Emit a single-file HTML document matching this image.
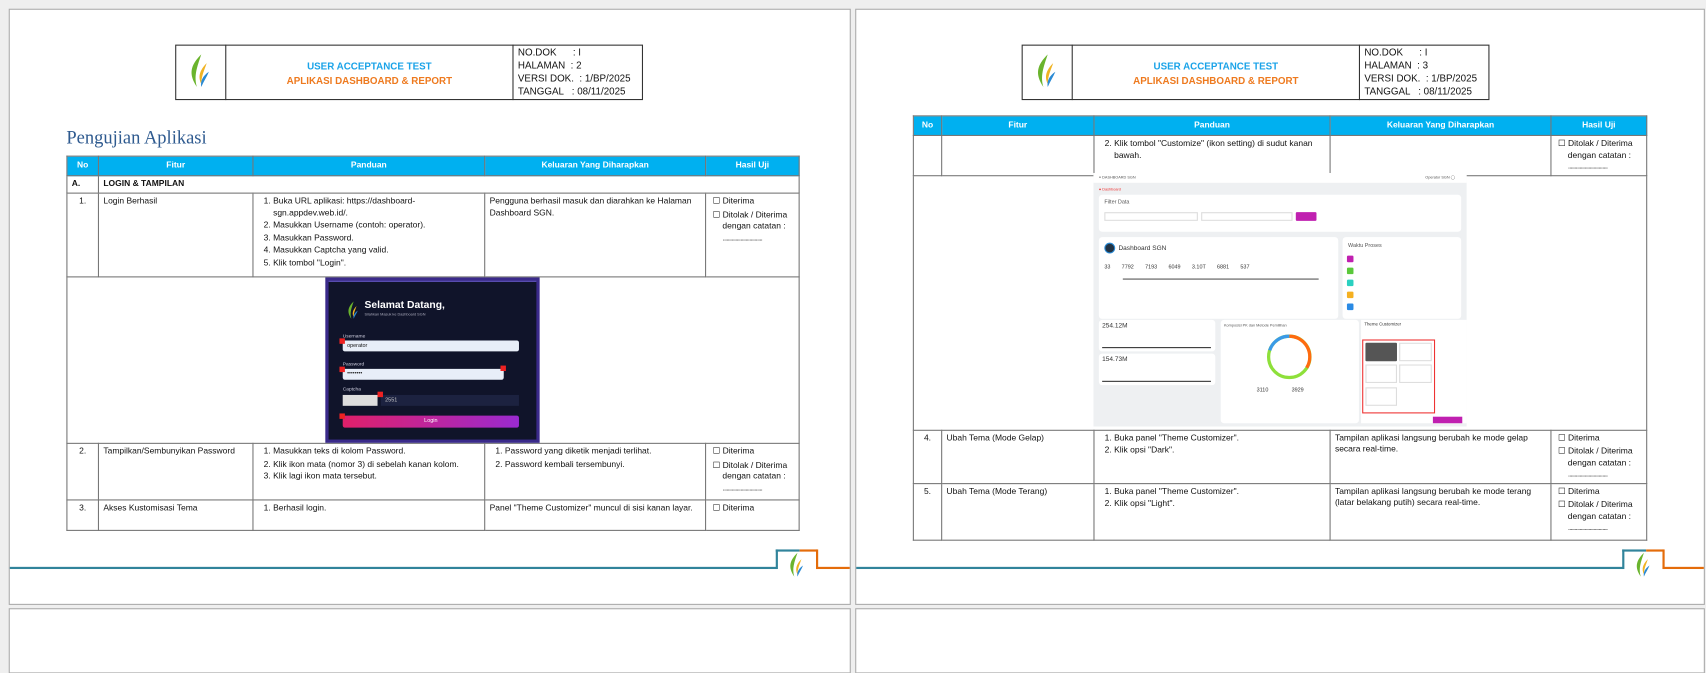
<!DOCTYPE html>
<html><head><meta charset="utf-8">
<style>
*{margin:0;padding:0;box-sizing:border-box}
body{width:1706px;height:613px;background:#efefef;position:relative;overflow:hidden;font-family:"Liberation Sans",sans-serif;font-size:8px;color:#111}
#w{position:absolute;left:0;top:0;width:1568px;height:564px;transform:scale(1.088);transform-origin:0 0}
.pg{position:absolute;background:#fff;border:1px solid #aaa}
.a{position:absolute}
.hb{position:absolute;border:1px solid #333;background:#fff}
.t1{color:#1aa3e8;font-weight:bold;font-size:9px;text-align:center}
.t2{color:#ee7a1f;font-weight:bold;font-size:9px;text-align:center}
.meta{font-size:9px;line-height:12px}
table{border-collapse:collapse;position:absolute;table-layout:fixed;background:#fff}
td,th{border:1px solid #777;vertical-align:top;padding:2px 4px;font-size:7.8px;line-height:10.5px}
th{background:#00b0f0;color:#fff;font-weight:bold;text-align:center;padding:3px 4px}
ol{padding-left:14px}
li{margin-bottom:1px}
.cb{padding-left:11px;text-indent:-9px}
.dots{color:#555;letter-spacing:-1px}
</style></head><body><div id="w">

<div class="pg" style="left:8px;top:8px;width:774px;height:548px"></div>
<div class="pg" style="left:8px;top:559px;width:774px;height:60px"></div>
<div class="pg" style="left:786px;top:8px;width:781px;height:548px"></div>
<div class="pg" style="left:786px;top:559px;width:781px;height:60px"></div>

<svg width="0" height="0" style="position:absolute"><defs>
<g id="logo">
<path d="M12 0 C2 10 0 18 8 30 C5 20 8 12 12 0Z" fill="#6ab42d"/>
<path d="M17 8 C10 15 9 21 12 27 C12 20 15 14 17 8Z" fill="#f0b323"/>
<path d="M19 16 C13 20 11 25 12 30 C14 25 17 21 19 16Z" fill="#2a8ad4"/>
</g></defs></svg>

<div class="hb" style="left:161px;top:41px;width:430px;height:51px"></div>
<div class="a" style="left:207px;top:41px;width:1px;height:51px;background:#333"></div>
<div class="a" style="left:471px;top:41px;width:1px;height:51px;background:#333"></div>
<svg class="a" style="left:173px;top:50px" width="22" height="32"><use href="#logo"/></svg>
<div class="a t1" style="left:208px;top:56px;width:263px">USER ACCEPTANCE TEST</div>
<div class="a t2" style="left:208px;top:69px;width:263px">APLIKASI DASHBOARD &amp; REPORT</div>
<div class="a meta" style="left:476px;top:42px">NO.DOK &nbsp;&nbsp;&nbsp;&nbsp;&nbsp;: I<br>HALAMAN &nbsp;: 2<br>VERSI DOK. &nbsp;: 1/BP/2025<br>TANGGAL &nbsp;&nbsp;: 08/11/2025</div>

<div class="a" style="left:61px;top:117px;font-family:'Liberation Serif',serif;font-size:17px;color:#2e5a8f">Pengujian Aplikasi</div>

<table style="left:61px;top:143px;width:673px">
<colgroup><col style="width:29px"><col style="width:142px"><col style="width:213px"><col style="width:203px"><col style="width:86px"></colgroup>
<tr style="height:18px"><th>No</th><th>Fitur</th><th>Panduan</th><th>Keluaran Yang Diharapkan</th><th>Hasil Uji</th></tr>
<tr style="height:16px"><td style="font-weight:bold">A.</td><td colspan="4" style="font-weight:bold">LOGIN &amp; TAMPILAN</td></tr>
<tr style="height:77px"><td style="text-align:center">1.</td><td>Login Berhasil</td><td><ol><li>Buka URL aplikasi: https://dashboard-sgn.appdev.web.id/.</li><li>Masukkan Username (contoh: operator).</li><li>Masukkan Password.</li><li>Masukkan Captcha yang valid.</li><li>Klik tombol "Login".</li></ol></td><td>Pengguna berhasil masuk dan diarahkan ke Halaman Dashboard SGN.</td><td><div class="cb">☐ Diterima</div><div class="cb" style="margin-top:2px">☐ Ditolak / Diterima dengan catatan :<br><span class="dots">...............................</span></div></td></tr>
<tr style="height:153px"><td colspan="5"></td></tr>
<tr style="height:52px"><td style="text-align:center">2.</td><td>Tampilkan/Sembunyikan Password</td><td><ol><li>Masukkan teks di kolom Password.</li><li>Klik ikon mata (nomor 3) di sebelah kanan kolom.</li><li>Klik lagi ikon mata tersebut.</li></ol></td><td><ol><li>Password yang diketik menjadi terlihat.</li><li>Password kembali tersembunyi.</li></ol></td><td><div class="cb">☐ Diterima</div><div class="cb" style="margin-top:2px">☐ Ditolak / Diterima dengan catatan :<br><span class="dots">...............................</span></div></td></tr>
<tr style="height:28px"><td style="text-align:center">3.</td><td>Akses Kustomisasi Tema</td><td><ol><li>Berhasil login.</li></ol></td><td>Panel "Theme Customizer" muncul di sisi kanan layar.</td><td><div class="cb">☐ Diterima</div></td></tr>
</table>

<div class="a" style="left:299px;top:255px;width:197px;height:152px;background:#3a2a8a;padding:3px">
<div style="width:100%;height:100%;background:#10142a;position:relative;border-top:1px solid #6a5ad0">
<svg class="a" style="left:16px;top:18px" width="12" height="16" viewBox="0 0 20 30"><use href="#logo"/></svg>
<div class="a" style="left:33px;top:16px;color:#fff;font-size:9.5px;font-weight:bold">Selamat Datang,</div>
<div class="a" style="left:33px;top:28px;color:#aab;font-size:3.5px">Silahkan Masuk ke Dashboard SGN</div>
<div class="a" style="left:13px;top:47px;color:#ccd;font-size:4.5px">Username</div>
<div class="a" style="left:13px;top:54px;width:162px;height:10px;background:#e8eef8;border-radius:2px;font-size:5px;padding:2px 4px">operator</div>
<div class="a" style="left:13px;top:73px;color:#ccd;font-size:4.5px">Password</div>
<div class="a" style="left:13px;top:80px;width:148px;height:10px;background:#e8eef8;border-radius:2px;font-size:5px;padding:1px 4px">••••••••</div>
<div class="a" style="left:13px;top:96px;color:#ccd;font-size:4.5px">Captcha</div>
<div class="a" style="left:13px;top:104px;width:32px;height:10px;background:#ddd"></div>
<div class="a" style="left:48px;top:104px;width:127px;height:10px;background:#1c2240;color:#ccc;font-size:5px;padding:2px 4px">2551</div>
<div class="a" style="left:13px;top:123px;width:162px;height:11px;background:linear-gradient(90deg,#e0206a,#9a2ad0);border-radius:2px;color:#fff;font-size:5px;text-align:center;line-height:11px">Login</div>
<div class="a" style="left:10px;top:52px;width:5px;height:5px;background:#e22"></div>
<div class="a" style="left:10px;top:78px;width:5px;height:5px;background:#e22"></div>
<div class="a" style="left:158px;top:77px;width:5px;height:5px;background:#e22"></div>
<div class="a" style="left:45px;top:101px;width:5px;height:5px;background:#e22"></div>
<div class="a" style="left:10px;top:121px;width:5px;height:5px;background:#e22"></div>
</div></div>

<div class="a" style="left:9px;top:521px;width:705px;height:2px;background:#31849b"></div>
<div class="a" style="left:713px;top:505px;width:2px;height:18px;background:#31849b"></div>
<div class="a" style="left:713px;top:505px;width:22px;height:2px;background:#31849b"></div>
<div class="a" style="left:735px;top:505px;width:16px;height:2px;background:#e46c0a"></div>
<div class="a" style="left:750px;top:505px;width:2px;height:18px;background:#e46c0a"></div>
<div class="a" style="left:750px;top:521px;width:31px;height:2px;background:#e46c0a"></div>
<svg class="a" style="left:724px;top:508px" width="15" height="22" viewBox="0 0 20 30"><use href="#logo"/></svg>

<div class="hb" style="left:939px;top:41px;width:430px;height:51px"></div>
<div class="a" style="left:985px;top:41px;width:1px;height:51px;background:#333"></div>
<div class="a" style="left:1249px;top:41px;width:1px;height:51px;background:#333"></div>
<svg class="a" style="left:951px;top:50px" width="22" height="32"><use href="#logo"/></svg>
<div class="a t1" style="left:986px;top:56px;width:263px">USER ACCEPTANCE TEST</div>
<div class="a t2" style="left:986px;top:69px;width:263px">APLIKASI DASHBOARD &amp; REPORT</div>
<div class="a meta" style="left:1254px;top:42px">NO.DOK &nbsp;&nbsp;&nbsp;&nbsp;&nbsp;: I<br>HALAMAN &nbsp;: 3<br>VERSI DOK. &nbsp;: 1/BP/2025<br>TANGGAL &nbsp;&nbsp;: 08/11/2025</div>

<table style="left:839px;top:106px;width:674px">
<colgroup><col style="width:26px"><col style="width:140px"><col style="width:217px"><col style="width:203px"><col style="width:88px"></colgroup>
<tr style="height:18px"><th>No</th><th>Fitur</th><th>Panduan</th><th>Keluaran Yang Diharapkan</th><th>Hasil Uji</th></tr>
<tr style="height:34px"><td></td><td></td><td><ol start="2"><li>Klik tombol "Customize" (ikon setting) di sudut kanan bawah.</li></ol></td><td></td><td><div class="cb">☐ Ditolak / Diterima dengan catatan :<br><span class="dots">...............................</span></div></td></tr>
<tr style="height:234px"><td colspan="5"></td></tr>
<tr style="height:49px"><td style="text-align:center">4.</td><td>Ubah Tema (Mode Gelap)</td><td><ol><li>Buka panel "Theme Customizer".</li><li>Klik opsi "Dark".</li></ol></td><td>Tampilan aplikasi langsung berubah ke mode gelap secara real-time.</td><td><div class="cb">☐ Diterima</div><div class="cb" style="margin-top:2px">☐ Ditolak / Diterima dengan catatan :<br><span class="dots">...............................</span></div></td></tr>
<tr style="height:52px"><td style="text-align:center">5.</td><td>Ubah Tema (Mode Terang)</td><td><ol><li>Buka panel "Theme Customizer".</li><li>Klik opsi "Light".</li></ol></td><td>Tampilan aplikasi langsung berubah ke mode terang (latar belakang putih) secara real-time.</td><td><div class="cb">☐ Diterima</div><div class="cb" style="margin-top:2px">☐ Ditolak / Diterima dengan catatan :<br><span class="dots">...............................</span></div></td></tr>
</table>

<div class="a" style="left:1005px;top:159px;width:343px;height:233px;background:#eef0f2;font-size:4px;color:#555">
<div class="a" style="left:0;top:0;width:343px;height:9px;background:#fff"></div>
<div class="a" style="left:5px;top:2px;font-size:3.5px">≡ DASHBOARD SGN</div>
<div class="a" style="left:305px;top:2px;font-size:3.5px">Operator SGN ◯</div>
<div class="a" style="left:5px;top:13px;color:#e33;font-size:3.5px">● Dashboard</div>
<div class="a" style="left:5px;top:20px;width:333px;height:34px;background:#fff;border-radius:3px"></div>
<div class="a" style="left:10px;top:24px;font-size:5px">Filter Data</div>
<div class="a" style="left:10px;top:36px;width:86px;height:8px;border:1px solid #ddd"></div>
<div class="a" style="left:99px;top:36px;width:84px;height:8px;border:1px solid #ddd"></div>
<div class="a" style="left:186px;top:36px;width:19px;height:8px;background:#c020b0;border-radius:1px"></div>
<div class="a" style="left:5px;top:59px;width:220px;height:75px;background:#fff;border-radius:3px"></div>
<div class="a" style="left:10px;top:64px;width:10px;height:10px;border-radius:50%;background:#234;border:1px solid #2a8ad4"></div>
<div class="a" style="left:23px;top:67px;font-size:6px;color:#333">Dashboard SGN</div>
<div class="a" style="left:10px;top:84px;font-size:5px;color:#333;word-spacing:9px">33 7792 7193 6049 3.10T 6881 537</div>
<div class="a" style="left:27px;top:97px;width:180px;height:1px;background:#555"></div>
<div class="a" style="left:229px;top:59px;width:109px;height:75px;background:#fff;border-radius:3px"></div>
<div class="a" style="left:234px;top:64px;font-size:5px">Waktu Proses</div>
<div class="a" style="left:233px;top:76px;width:6px;height:6px;background:#c020b0;border-radius:1px"></div>
<div class="a" style="left:233px;top:87px;width:6px;height:6px;background:#5ac83a;border-radius:1px"></div>
<div class="a" style="left:233px;top:98px;width:6px;height:6px;background:#2ad0c0;border-radius:1px"></div>
<div class="a" style="left:233px;top:109px;width:6px;height:6px;background:#f5b020;border-radius:1px"></div>
<div class="a" style="left:233px;top:120px;width:6px;height:6px;background:#2a8ae4;border-radius:1px"></div>
<div class="a" style="left:5px;top:135px;width:107px;height:29px;background:#fff;border-radius:3px"></div>
<div class="a" style="left:8px;top:138px;font-size:6px;color:#333">254.12M</div>
<div class="a" style="left:8px;top:160px;width:100px;height:1px;background:#333"></div>
<div class="a" style="left:5px;top:166px;width:107px;height:29px;background:#fff;border-radius:3px"></div>
<div class="a" style="left:8px;top:169px;font-size:6px;color:#333">154.73M</div>
<div class="a" style="left:8px;top:191px;width:100px;height:1px;background:#333"></div>
<div class="a" style="left:117px;top:135px;width:127px;height:95px;background:#fff;border-radius:3px"></div>
<div class="a" style="left:120px;top:138px;font-size:3.5px">Komposisi PK dan Metode Pemilihan</div>
<svg class="a" style="left:158px;top:147px" width="44" height="44"><circle cx="22" cy="22" r="19" fill="none" stroke="#8ee03a" stroke-width="3"/><path d="M22 3 A19 19 0 0 1 38 32" fill="none" stroke="#ff6a10" stroke-width="3"/><path d="M4 16 A19 19 0 0 1 22 3" fill="none" stroke="#3a9ae8" stroke-width="3"/></svg>
<div class="a" style="left:150px;top:197px;font-size:5px;color:#333;word-spacing:20px">3110 3929</div>
<div class="a" style="left:246px;top:135px;width:97px;height:95px;background:#fff"></div>
<div class="a" style="left:249px;top:136px;font-size:4px;color:#333">Theme Customizer</div>
<div class="a" style="left:247px;top:153px;width:67px;height:68px;border:1px solid #e33"></div>
<div class="a" style="left:250px;top:156px;width:29px;height:17px;background:#555;border-radius:1px"></div>
<div class="a" style="left:281px;top:156px;width:30px;height:17px;border:1px solid #ddd"></div>
<div class="a" style="left:250px;top:176px;width:29px;height:17px;border:1px solid #ddd"></div>
<div class="a" style="left:281px;top:176px;width:30px;height:17px;border:1px solid #ddd"></div>
<div class="a" style="left:250px;top:197px;width:29px;height:17px;border:1px solid #ddd"></div>
<div class="a" style="left:312px;top:224px;width:27px;height:6px;background:#c020b0"></div>
</div>

<div class="a" style="left:787px;top:521px;width:705px;height:2px;background:#31849b"></div>
<div class="a" style="left:1491px;top:505px;width:2px;height:18px;background:#31849b"></div>
<div class="a" style="left:1491px;top:505px;width:22px;height:2px;background:#31849b"></div>
<div class="a" style="left:1513px;top:505px;width:16px;height:2px;background:#e46c0a"></div>
<div class="a" style="left:1528px;top:505px;width:2px;height:18px;background:#e46c0a"></div>
<div class="a" style="left:1528px;top:521px;width:38px;height:2px;background:#e46c0a"></div>
<svg class="a" style="left:1502px;top:508px" width="15" height="22" viewBox="0 0 20 30"><use href="#logo"/></svg>

</div></body></html>
